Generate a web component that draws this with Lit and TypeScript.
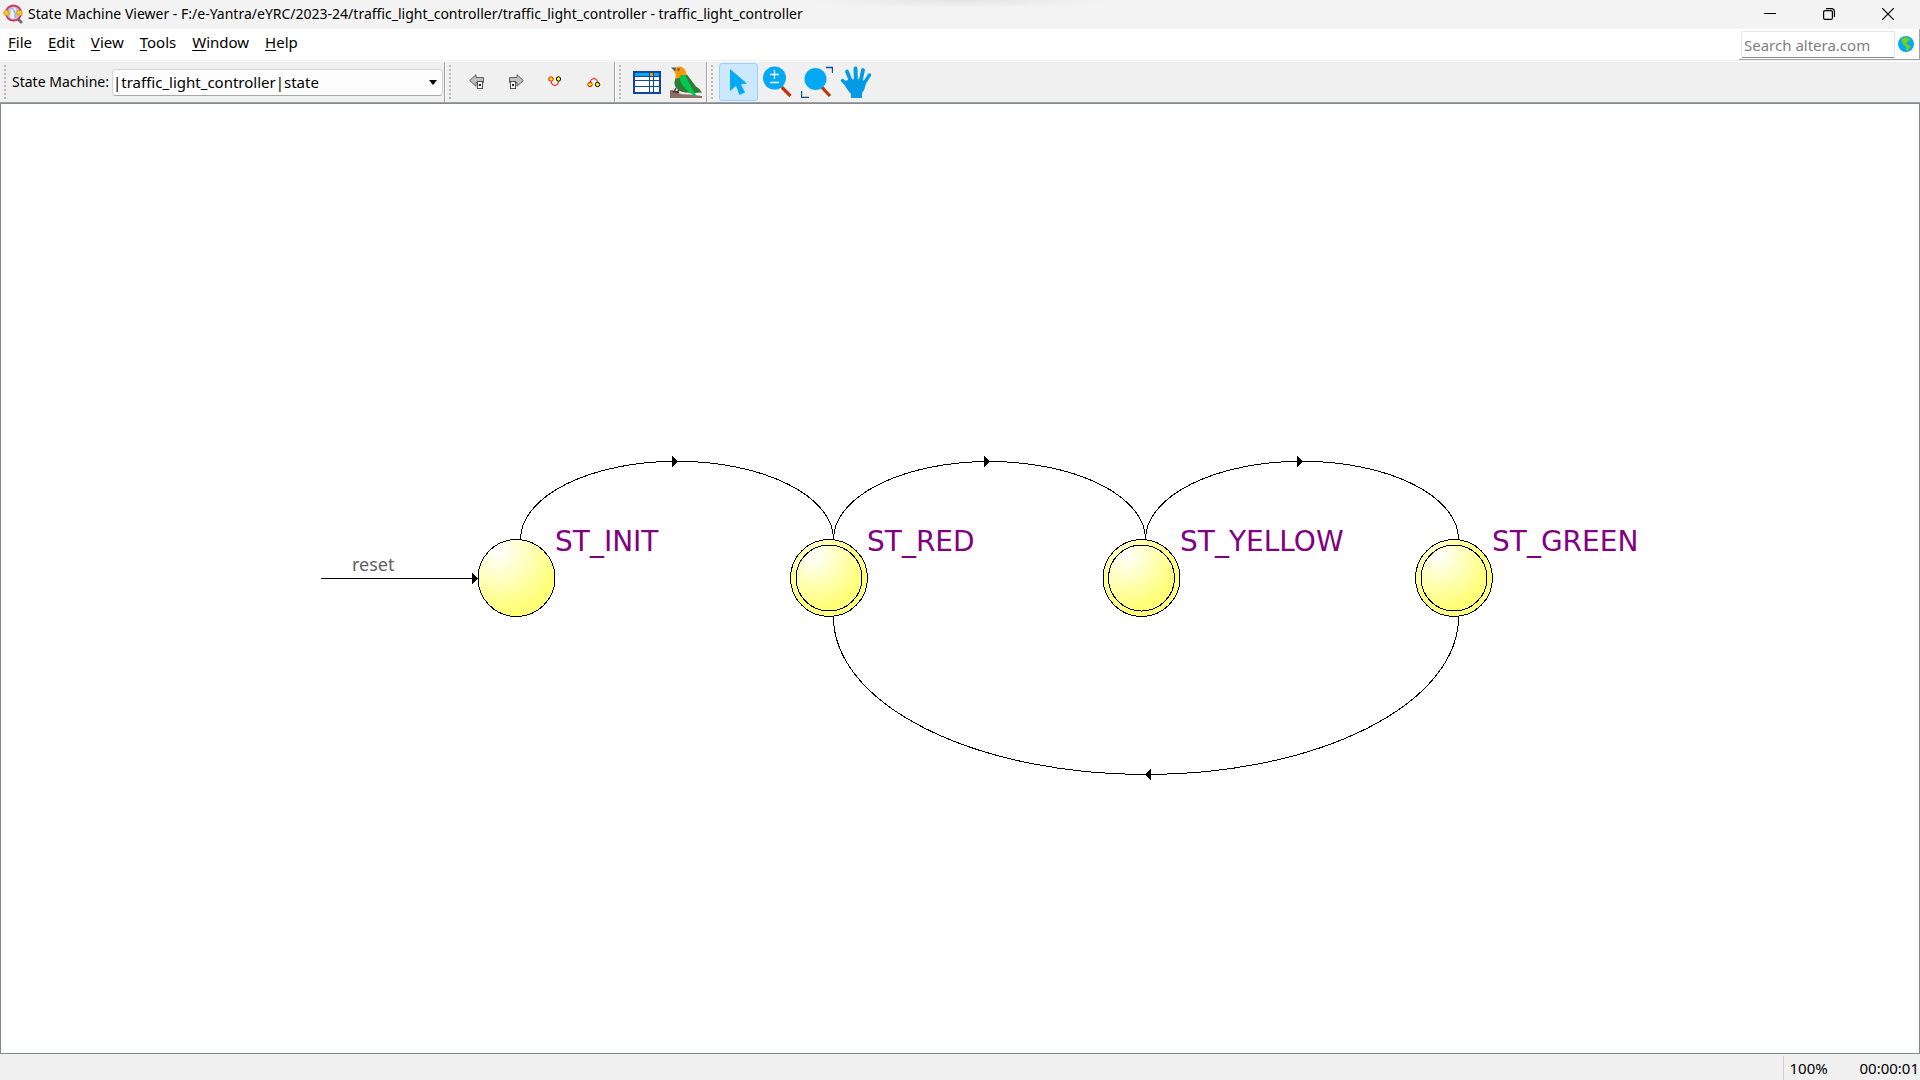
import { LitElement, html, css, svg } from "lit";
import { customElement, state } from "lit/decorators.js";

interface StateNode {
  name: string;
  x: number;
  output: boolean;
}

const NODES: StateNode[] = [
  { name: "ST_INIT", x: 516.5, output: false },
  { name: "ST_RED", x: 829, output: true },
  { name: "ST_YELLOW", x: 1141.5, output: true },
  { name: "ST_GREEN", x: 1454, output: true },
];
const ROW_Y = 578;
const RADIUS = 38.5;

const appIcon = html`<svg class="app-icon" viewBox="0 0 20 20" width="20" height="20" aria-hidden="true">
  <path d="M14 14L18 18" stroke="#6b6b70" stroke-width="3" stroke-linecap="round" />
  <circle cx="10.500" cy="9" r="7.600" fill="#b4c6de" stroke="#dc2f55" stroke-width="2" />
  <path d="M8 4.500Q11 2 13 5L12.500 14Q9 16 7 13Z" fill="#e9f0f8" />
  <path d="M8 4Q13 5 12 14" fill="none" stroke="#8295b5" />
  <circle cx="3.500" cy="9" r="2.800" fill="#f6c51f" stroke="#c98a28" stroke-width=".6" />
  <circle cx="16.500" cy="9" r="2.800" fill="#f6c51f" stroke="#c98a28" stroke-width=".6" />
</svg>`;

const backIcon = html`<svg viewBox="0 0 16 16" width="16" height="16" aria-hidden="true">
  <path d="M.7 6.500L7 .7V3.500H14.500V8.500H7V12.300Z" fill="#c0c0c0" stroke="#606060" />
  <rect x="8.500" y="7.500" width="5" height="7" fill="#fff" stroke="#505050" />
  <rect x="10" y="10" width="2" height="2" fill="#222" />
</svg>`;

const forwardIcon = html`<svg viewBox="0 0 16 16" width="16" height="16" aria-hidden="true">
  <path d="M15.300 6.500L9 .7V3.500H1.500V8.500H9V12.300Z" fill="#c0c0c0" stroke="#606060" />
  <rect x="2.500" y="7.500" width="5" height="7" fill="#fff" stroke="#505050" />
  <rect x="4" y="10" width="2" height="2" fill="#222" />
</svg>`;

const fanOutIcon = html`<svg viewBox="0 0 16 16" width="16" height="16" aria-hidden="true">
  <path d="M4 7.500Q4.500 11.500 8 11.500T11.500 7.500" fill="none" stroke="#f00" />
  <circle cx="4" cy="5" r="2.200" fill="#ff0" stroke="#f00" />
  <circle cx="11.500" cy="5" r="2.200" fill="#ff0" stroke="#000" />
</svg>`;

const fanInIcon = html`<svg viewBox="0 0 16 16" width="16" height="16" aria-hidden="true">
  <path d="M4 8.500Q4.500 4.500 8 4.500T11.500 8.500" fill="none" stroke="#f00" />
  <circle cx="4" cy="10.500" r="2.200" fill="#ff0" stroke="#f00" />
  <circle cx="11.500" cy="10.500" r="2.200" fill="#ff0" stroke="#000" />
</svg>`;

const tableIcon = html`<svg viewBox="0 0 28 23" width="28" height="23" aria-hidden="true" shape-rendering="crispEdges">
  <rect width="28" height="23" fill="#0d47a1" />
  <rect x="2" y="2" width="14" height="3" fill="#03a9f4" />
  <rect x="17" y="2" width="3" height="3" fill="#ff9800" />
  <rect x="21" y="2" width="5" height="3" fill="#03a9f4" />
  <path
    fill="#fff"
    d="M2 6h14v3H2zM17 6h3v3h-3zM21 6h5v3h-5zM2 10h14v5H2zM17 10h3v5h-3zM21 10h5v5h-5zM2 16h14v5H2zM17 16h3v5h-3zM21 16h5v5h-5z"
  />
</svg>`;

const birdIcon = html`<svg viewBox="0 0 32 32" width="32" height="32" aria-hidden="true">
  <path d="M0 24Q5 24 8 27Q14 29 20 28.500L32 30V32H0Z" fill="#8d6e63" />
  <path d="M6 11Q3.500 16 5 20Q7.500 25.500 15 26.500L24 27L32 26.500Q29 22 25.500 20L17 8.500Z" fill="#2e7d32" />
  <path d="M4.500 3Q6 .3 10 .5Q15 1 16.500 8Q14 12.500 9 12Q6 12.500 5.500 13Q6.500 8 4.500 6Z" fill="#ff9800" />
  <path d="M9 10.500Q14 6.500 17 12Q19 18 27 30.500L24.500 30Q11 22 9 10.500Z" fill="#00c853" />
  <path d="M1 1.500L6 1.500L5 5.500Z" fill="#455a64" />
  <circle cx="8.500" cy="3.500" r="1.100" fill="#263238" />
  <path d="M6 22L4 26M9 24L6 27M2.500 25.500L9 26.500" stroke="#4e342e" stroke-width="1.300" fill="none" />
</svg>`;

const pointerIcon = html`<svg viewBox="0 0 32 32" width="32" height="32" aria-hidden="true">
  <path d="M7 3V25L13 20L16.500 29L22 26.500L18 18.500L24 17.500Z" fill="#03a9f4" />
</svg>`;

const zoomIcon = html`<svg viewBox="0 0 32 32" width="32" height="32" aria-hidden="true">
  <path d="M18 19L22 23" stroke="#78909c" stroke-width="2.500" />
  <path d="M20 21.500L28.500 30" stroke="#bf360c" stroke-width="3.200" />
  <circle cx="12.500" cy="12" r="11.500" fill="#03a9f4" />
  <path d="M8 8.500H17M12.500 4V13M8 16.500H17" stroke="#fff" stroke-width="1.300" />
</svg>`;

const fitIcon = html`<svg viewBox="0 0 32 32" width="32" height="32" aria-hidden="true">
  <path d="M19 19L23 23" stroke="#78909c" stroke-width="2.500" />
  <path d="M21 21.500L29 30" stroke="#bf360c" stroke-width="3.200" />
  <circle cx="14.500" cy="13" r="11" fill="#03a9f4" />
  <path d="M25 1.500H31.500V7M.5 25V31.500H8" fill="none" stroke="#0d4f8c" stroke-width="1.300" />
</svg>`;

const handIcon = html`<svg viewBox="0 0 32 32" width="32" height="32" aria-hidden="true">
  <g fill="none" stroke="#039be5" stroke-linecap="round">
    <path d="M2.500 14.500L10 22" stroke-width="3.400" />
    <path d="M7 5.500L12 18" stroke-width="3.800" />
    <path d="M15.500 2.500L16 18" stroke-width="4" />
    <path d="M23 4L20 18" stroke-width="3.800" />
    <path d="M29.500 9L23 19" stroke-width="3.400" />
  </g>
  <path d="M9 14L14.500 13H17.500L22 13.500L26 16Q25 24 22 27V32H11V28Q6 23 3 15Z" fill="#039be5" />
</svg>`;

const globeIcon = html`<svg viewBox="0 0 16 16" width="16" height="16" aria-hidden="true">
  <circle cx="8" cy="8" r="8" fill="#03a9f4" />
  <path
    d="M3.500 3Q6 .8 9 1.300L10 2.500L12 2.500L12.500 4L10.500 5L9 6.500L8.300 8L11 9L12.500 10.500L11 13L9.500 15L8 14L8 11L6 9L4.500 7.500Z"
    fill="#76d013"
  />
</svg>`;

@customElement("app-root")
export class AppRoot extends LitElement {
  static styles = css`
    :host {
      display: flex;
      flex-direction: column;
      height: 100vh;
      overflow: hidden;
      background: #f0f0f0;
      color: #000;
      font: 15px/20px "Noto Sans", "Open Sans", sans-serif;
    }
    * {
      box-sizing: border-box;
    }
    svg {
      display: block;
    }
    button,
    input,
    select {
      font: inherit;
      color: inherit;
      margin: 0;
      padding: 0;
      border: 0;
      background: none;
    }
    .titlebar {
      display: flex;
      align-items: center;
      height: 29px;
      padding: 0 3px 1px;
      background: radial-gradient(ellipse 150px 8px at 50% 0, #e4e4e4, #f3f3f3) #f3f3f3;
    }
    .app-icon {
      flex: none;
      margin-right: 5px;
    }
    .title {
      flex: 1;
      margin: 0;
      font-size: 14px;
      font-weight: 400;
      line-height: 20px;
      white-space: nowrap;
      overflow: hidden;
    }
    .window-button {
      display: grid;
      place-items: center;
      width: 59px;
      height: 28px;
    }
    .menubar {
      display: flex;
      justify-content: space-between;
      height: 32px;
      background: #fff;
      border-bottom: 1px solid #f0f0f0;
    }
    .menus {
      display: flex;
      align-items: flex-start;
      gap: 16px;
      padding: 3px 8px;
    }
    .mnemonic {
      text-decoration: underline;
      text-underline-offset: 2px;
    }
    .search {
      display: flex;
      align-items: center;
      gap: 3px;
      height: 31px;
      padding: 0 5px 0 2px;
      border-right: 1px solid #a0a0a0;
      border-bottom: 1px solid #a0a0a0;
    }
    .search-input {
      width: 154px;
      height: 27px;
      padding: 2px 2px 0;
      border: 1px solid #e5e5e5;
      border-bottom-color: #868686;
      border-radius: 2px;
    }
    .search-input::placeholder {
      color: #7f7f7f;
      opacity: 1;
    }
    .toolbar {
      display: flex;
      height: 42px;
      border-top: 1px solid #fff;
      border-bottom: 1px solid #a0a0a0;
    }
    .group {
      display: flex;
      align-items: center;
      padding-left: 4px;
      border-right: 1px solid #a0a0a0;
    }
    .group + .group {
      border-left: 1px solid #fff;
      padding-left: 3px;
    }
    .group:last-child {
      border-right: 0;
    }
    .grip {
      flex: none;
      width: 2px;
      height: 34px;
      background: repeating-linear-gradient(#b8b8b8 0 2px, transparent 2px 4px);
    }
    .machine {
      padding-right: 1px;
    }
    .machine-label {
      padding: 0 3px 0 6px;
      font-size: 14px;
      white-space: nowrap;
    }
    .select-box {
      display: grid;
      align-items: center;
    }
    .select-box > * {
      grid-area: 1 / 1;
    }
    .machine-select {
      appearance: none;
      width: 331px;
      height: 27px;
      padding: 0 20px 0 0;
      background: #fdfdfd;
      border: 1px solid #d4d4d4;
      border-bottom-color: #a8a8a8;
      border-radius: 4px;
    }
    .caret {
      justify-self: end;
      margin-right: 6px;
      pointer-events: none;
    }
    .tool {
      display: grid;
      place-items: center;
      width: 39px;
      height: 38px;
      border: 1px solid transparent;
      border-radius: 3px;
    }
    .tool.active {
      background: #cce8ff;
      border-color: #99d1ff;
    }
    .navigation,
    .views {
      padding-right: 1px;
    }
    .grip + .tool {
      margin-left: 6px;
    }
    .canvas {
      flex: 1;
      min-height: 0;
      background: #fff;
      border: 1px solid #828790;
    }
    .diagram {
      width: 100%;
      height: 100%;
    }
    .wire {
      fill: none;
      stroke: #000;
      shape-rendering: crispEdges;
    }
    .head {
      fill: #000;
      shape-rendering: crispEdges;
    }
    .node {
      fill: url(#glow);
      stroke: #000;
      shape-rendering: crispEdges;
    }
    .node.rim {
      fill: url(#rim);
    }
    .node-name {
      fill: #800080;
      font-family: "DejaVu Sans", sans-serif;
      font-size: 28px;
    }
    .edge-name {
      fill: #606060;
      font-size: 18px;
    }
    .statusbar {
      display: flex;
      justify-content: flex-end;
      height: 26px;
      padding: 2px 1px 0 0;
    }
    .zoom-level {
      width: 76px;
      padding: 2px 0 0 5px;
      border-left: 1px solid #d0d0d0;
    }
    .elapsed {
      padding-top: 2px;
    }
  `;

  @state() private mode = "Select";

  private tool(label: string, icon: unknown) {
    return html`<button class="tool" type="button" aria-label=${label}>${icon}</button>`;
  }

  private modeTool(label: string, icon: unknown) {
    const active = this.mode === label;
    return html`<button
      class=${active ? "tool active" : "tool"}
      type="button"
      aria-label=${label}
      aria-pressed=${active ? "true" : "false"}
      @click=${() => (this.mode = label)}
    >
      ${icon}
    </button>`;
  }

  private node(n: StateNode) {
    return svg`
      ${n.output ? svg`<circle class="node rim" cx=${n.x} cy=${ROW_Y} r=${RADIUS} />` : null}
      <circle class="node" cx=${n.x} cy=${ROW_Y} r=${n.output ? 33 : RADIUS} />
      <text class="node-name" x=${Math.round(n.x) + 38} y="551">${n.name}</text>`;
  }

  private arc(from: number, to: number) {
    const mid = Math.floor((from + to) / 2);
    return svg`
      <path class="wire" d="M${from} 539A156 77.500 0 0 1 ${to} 539" />
      <path class="head" d="M${mid - 5} 455.500V467.500L${mid + 1} 461.500Z" />`;
  }

  render() {
    return html`
      <header class="titlebar">
        ${appIcon}
        <h1 class="title">
          State Machine Viewer - F:/e-Yantra/eYRC/2023-24/traffic_light_controller/traffic_light_controller -
          traffic_light_controller
        </h1>
        <button class="window-button" type="button" aria-label="Minimize">
          <svg viewBox="0 0 12 12" width="12" height="12"><path d="M0 5.500H12" stroke="#000" /></svg>
        </button>
        <button class="window-button" type="button" aria-label="Restore">
          <svg viewBox="0 0 12 12" width="12" height="12" fill="none" stroke="#000" stroke-width="1.200">
            <rect x=".6" y="2.600" width="8.800" height="8.800" rx="1.500" />
            <path d="M3 .6H8.500Q11.400 .6 11.400 3.500V9" />
          </svg>
        </button>
        <button class="window-button" type="button" aria-label="Close">
          <svg viewBox="0 0 12 12" width="12" height="12"><path d="M0 0L12 12M12 0L0 12" stroke="#000" stroke-width="1.200" /></svg>
        </button>
      </header>

      <div class="menubar">
        <nav class="menus" aria-label="Main menu">
          ${["File", "Edit", "View", "Tools", "Window", "Help"].map(
            (m) => html`<button type="button"><span class="mnemonic">${m[0]}</span>${m.slice(1)}</button>`
          )}
        </nav>
        <form class="search" @submit=${(e: Event) => e.preventDefault()}>
          <input class="search-input" type="text" placeholder="Search altera.com" aria-label="Search altera.com" />
          <button type="submit" aria-label="Search">${globeIcon}</button>
        </form>
      </div>

      <div class="toolbar">
        <div class="group machine">
          <span class="grip"></span>
          <label class="machine-label" for="machine">State Machine:</label>
          <div class="select-box">
            <select class="machine-select" id="machine">
              <option>|traffic_light_controller|state</option>
            </select>
            <svg class="caret" viewBox="0 0 8 5" width="8" height="5"><path d="M0 0H8L4 5Z" /></svg>
          </div>
        </div>
        <div class="group navigation">
          <span class="grip"></span>
          ${this.tool("Back", backIcon)} ${this.tool("Forward", forwardIcon)}
          ${this.tool("Fan-out", fanOutIcon)} ${this.tool("Fan-in", fanInIcon)}
        </div>
        <div class="group views">
          <span class="grip"></span>
          ${this.tool("State table", tableIcon)} ${this.tool("Bird's eye view", birdIcon)}
        </div>
        <div class="group modes">
          <span class="grip"></span>
          ${this.modeTool("Select", pointerIcon)} ${this.modeTool("Zoom", zoomIcon)}
          ${this.modeTool("Fit in window", fitIcon)} ${this.modeTool("Pan", handIcon)}
        </div>
      </div>

      <main class="canvas">
        <svg class="diagram" viewBox="1 104 1918 949" role="img" aria-label="State diagram">
          <defs>
            <radialGradient id="glow" cx=".26" cy=".15" r=".8">
              <stop offset="0" stop-color="#ffffff" />
              <stop offset="1" stop-color="#ffff78" />
            </radialGradient>
            <radialGradient id="rim" cx=".26" cy=".15" r=".6">
              <stop offset="0" stop-color="#ffffc8" />
              <stop offset="1" stop-color="#ffff80" />
            </radialGradient>
          </defs>
          ${this.arc(520.5, 833.5)} ${this.arc(833.5, 1145.5)} ${this.arc(1145.5, 1458.5)}
          <path class="wire" d="M1458.500 617A312.500 157.500 0 0 1 833.500 617" />
          <path class="head" d="M1151 768.500V780.500L1145 774.500Z" />
          <path class="wire" d="M321 578.500H477" />
          <path class="head" d="M472 572.500V584.500L478 578.500Z" />
          <text class="edge-name" x="352" y="571">reset</text>
          ${NODES.map((n) => this.node(n))}
        </svg>
      </main>

      <footer class="statusbar">
        <span class="zoom-level">100%</span>
        <span class="elapsed">00:00:01</span>
      </footer>
    `;
  }
}
